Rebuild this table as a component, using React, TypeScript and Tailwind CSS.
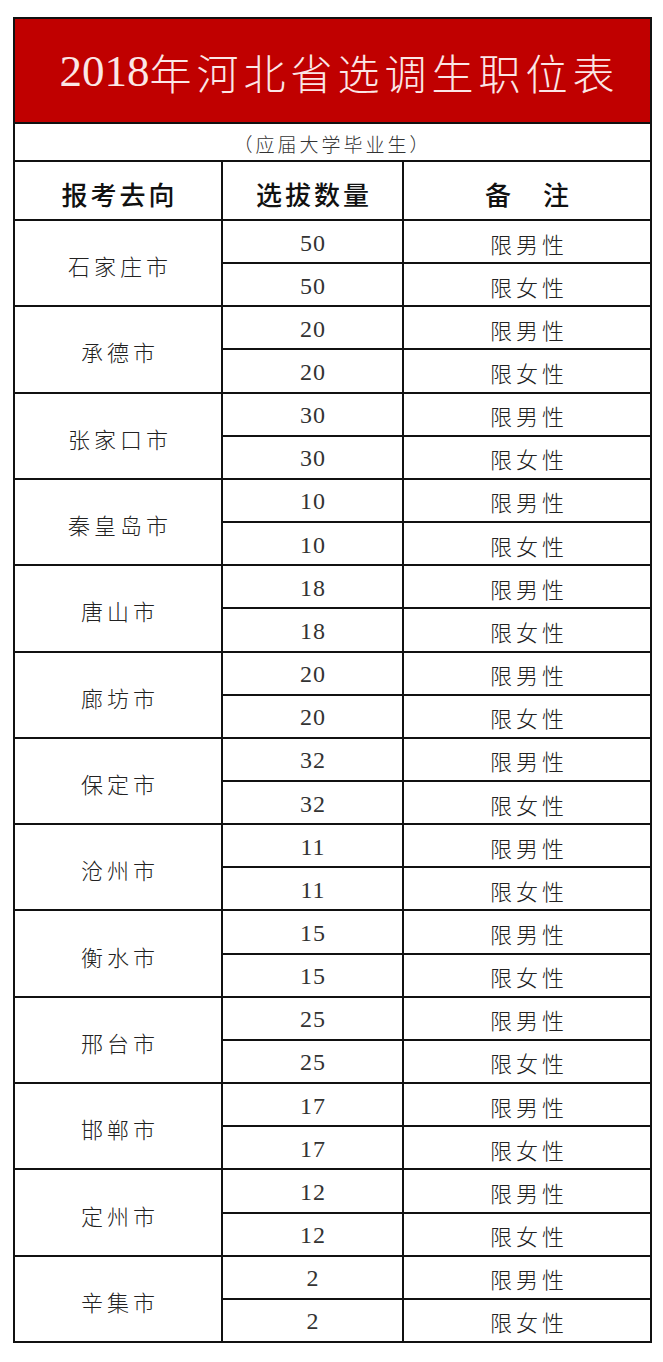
import React from "react";

const rows: [string, string][] = [
  ["石家庄市", "50"],
  ["承德市", "20"],
  ["张家口市", "30"],
  ["秦皇岛市", "10"],
  ["唐山市", "18"],
  ["廊坊市", "20"],
  ["保定市", "32"],
  ["沧州市", "11"],
  ["衡水市", "15"],
  ["邢台市", "25"],
  ["邯郸市", "17"],
  ["定州市", "12"],
  ["辛集市", "2"],
];

const cjk = { fontFamily: '"Noto Sans CJK SC", "Noto Sans", sans-serif' };
const serif = { fontFamily: '"Liberation Serif", "Noto Sans CJK SC", serif' };

export default function App() {
  return (
    <div className="min-h-[1362px] w-[663px] bg-white pt-[17px] pl-[13px]">
      <div
        className="grid h-[1326px] w-[639px] gap-[2px] bg-[#111] p-[2px] grid-cols-[206px_179px_246px] grid-rows-[103px_36px_57px_repeat(26,minmax(0,1fr))]"
        style={cjk}
      >
        <div className="col-span-3 flex items-center justify-center bg-[#c00000] text-[#fbe6e6] pt-[2px] pl-[14px]">
          <span className="text-[45px] leading-none" style={serif}>
            2018
          </span>
          <span className="text-[42px] leading-none font-light tracking-[5px]" style={cjk}>
            年河北省选调生职位表
          </span>
        </div>
        <div className="col-span-3 flex items-center justify-center bg-white text-[#333] pt-[2px]">
          <span className="text-[19px] leading-none font-light tracking-[3px]">（应届大学毕业生）</span>
        </div>
        <div className="flex items-center justify-center bg-white text-[#111] pt-[6px] pl-[3px]">
          <span className="text-[26px] leading-none font-medium tracking-[3px]">报考去向</span>
        </div>
        <div className="flex items-center justify-center bg-white text-[#111] pt-[6px] pl-[3px]">
          <span className="text-[26px] leading-none font-medium tracking-[3px]">选拔数量</span>
        </div>
        <div className="flex items-center justify-center bg-white text-[#111] pt-[6px] pl-[3px]">
          <span className="text-[26px] leading-none font-medium tracking-[3px]">备　注</span>
        </div>
        {rows.map(([city, num]) => (
          <React.Fragment key={city}>
            <div className="row-span-2 flex items-center justify-center bg-white text-[#222] pt-[4px] pl-[4px]">
              <span className="text-[22px] leading-none font-light tracking-[4px]">{city}</span>
            </div>
            <div className="flex items-center justify-center bg-white text-[#333] pt-[2px] pl-[1px]">
              <span className="text-[24px] leading-none tracking-[1px]" style={serif}>
                {num}
              </span>
            </div>
            <div className="flex items-center justify-center bg-white text-[#222] pt-[2px] pl-[4px]">
              <span className="text-[22px] leading-none font-light tracking-[4px]">限男性</span>
            </div>
            <div className="flex items-center justify-center bg-white text-[#333] pt-[2px] pl-[1px]">
              <span className="text-[24px] leading-none tracking-[1px]" style={serif}>
                {num}
              </span>
            </div>
            <div className="flex items-center justify-center bg-white text-[#222] pt-[2px] pl-[4px]">
              <span className="text-[22px] leading-none font-light tracking-[4px]">限女性</span>
            </div>
          </React.Fragment>
        ))}
      </div>
    </div>
  );
}
